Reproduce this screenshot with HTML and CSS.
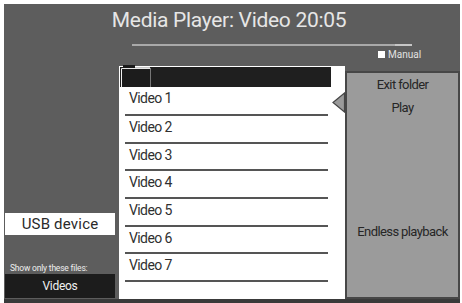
FILE: index.html
```html
<!DOCTYPE html>
<html lang="en">
<head>
<meta charset="utf-8">
<title>Media Player</title>
<link rel="stylesheet" href="styles.css">
</head>
<body>
<div class="screen">
  <header class="head">
    <h1 class="title">Media Player: Video 20:05</h1>
    <div class="track"></div>
    <div class="manual"><span class="check"></span><span class="manual-label">Manual</span></div>
  </header>
  <main class="main">
    <aside class="side">
      <div class="source">USB device</div>
      <div class="filter-label">Show only these files:</div>
      <div class="filter">Videos</div>
    </aside>
    <section class="list">
      <div class="list-bar">
        <svg class="folder" viewBox="0 0 30 23" width="30" height="23">
          <path d="M2 5 V1 H14 V5 Z" fill="#1a1a1a"/>
          <path d="M14 3 H29 V5 H14 Z" fill="#c8c8c8"/>
          <path d="M0.5 4.5 H29.5" stroke="#e6e6e6" stroke-width="1"/>
          <path d="M1 5 H29 V23 H1 Z" fill="#1c1c1c"/>
          <path d="M0.5 4.5 V23" stroke="#f2f2f2" stroke-width="1"/>
          <path d="M29.5 4.5 V23" stroke="#777" stroke-width="1"/>
        </svg>
      </div>
      <ul class="items">
        <li class="item first">Video 1</li>
        <li class="item">Video 2</li>
        <li class="item">Video 3</li>
        <li class="item">Video 4</li>
        <li class="item">Video 5</li>
        <li class="item">Video 6</li>
        <li class="item">Video 7</li>
      </ul>
    </section>
    <nav class="menu">
      <svg class="pointer" viewBox="0 0 13 21" width="13" height="21">
        <polygon points="1,10.5 12.5,1 12.5,20" fill="#9a9a9a" stroke="#454545" stroke-width="1.2"/>
      </svg>
      <div class="menu-item">Exit folder</div>
      <div class="menu-item">Play</div>
      <div class="menu-item last">Endless playback</div>
    </nav>
  </main>
</div>
</body>
</html>
```
FILE: styles.css
```css
* { box-sizing: border-box; }
html, body { margin: 0; padding: 0; background: #fff; }
body { font-family: Roboto, "Liberation Sans", sans-serif; }

.screen {
  margin: 4px 0 0 4px;
  width: 456px;
  height: 299px;
  background: #5d5d5d;
  border-bottom: 4px solid #3a3a3a;
  overflow: hidden;
}

.head {
  height: 62px;
  padding-top: 4px;
}
.title {
  margin: 0;
  padding-right: 6px;
  font-weight: 400;
  font-size: 21px;
  line-height: 24px;
  letter-spacing: -0.3px;
  text-align: center;
  color: #e6e6e6;
}
.track {
  margin: 12px 0 0 128px;
  width: 280px;
  height: 2px;
  background: linear-gradient(to right, #a9a9a9 0, #a9a9a9 263px, #c6c6c6 263px);
}
.manual {
  margin: 4px 0 0 374px;
  height: 9px;
  display: flex;
  align-items: center;
  gap: 3px;
}
.check {
  width: 7px;
  height: 7px;
  background: #fff;
}
.manual-label {
  font-size: 10px;
  line-height: 9px;
  color: #e2e2e2;
}

.main {
  display: grid;
  grid-template-columns: 115px 226px 115px;
  height: 233px;
}

.side {
  padding-left: 1px;
  display: flex;
  flex-direction: column;
}
.source {
  margin-top: 147px;
  width: 110px;
  height: 22px;
  background: #fff;
  color: #2a2a2a;
  font-size: 15px;
  line-height: 22px;
  letter-spacing: 0.2px;
  text-align: center;
}
.filter-label {
  margin-top: 28px;
  padding-left: 5px;
  font-size: 8.5px;
  line-height: 10px;
  letter-spacing: -0.2px;
  color: #eeeeee;
  white-space: nowrap;
}
.filter {
  margin-top: 1px;
  width: 110px;
  height: 24px;
  background: #1c1c1c;
  color: #f0f0f0;
  font-size: 12px;
  line-height: 24px;
  letter-spacing: -0.3px;
  text-align: center;
}

.list {
  background: #fff;
  display: flex;
  flex-direction: column;
}
.list-bar {
  position: relative;
  margin: 1px 14px 0 1px;
  height: 20px;
  background: #1f1f1f;
}
.folder {
  position: absolute;
  left: 1px;
  top: -3px;
  display: block;
}
.items {
  list-style: none;
  margin: 0;
  padding: 0;
}
.item {
  margin: 0 17px 0 6px;
  padding: 1px 0 0 4px;
  height: 27.7px;
  border-bottom: 2px solid #555;
  font-size: 14px;
  line-height: 20px;
  letter-spacing: -0.6px;
  color: #303030;
}
.item.first { height: 29px; }

.menu {
  position: relative;
  margin-top: 5px;
  border: 2px solid #474747;
  background: #9b9b9b;
  text-align: center;
  color: #262626;
  font-size: 13px;
  letter-spacing: -0.6px;
}
.pointer {
  position: absolute;
  left: -15px;
  top: 19px;
  display: block;
}
.menu-item { line-height: 23px; }
.menu-item.last { margin-top: 101px; }
```
